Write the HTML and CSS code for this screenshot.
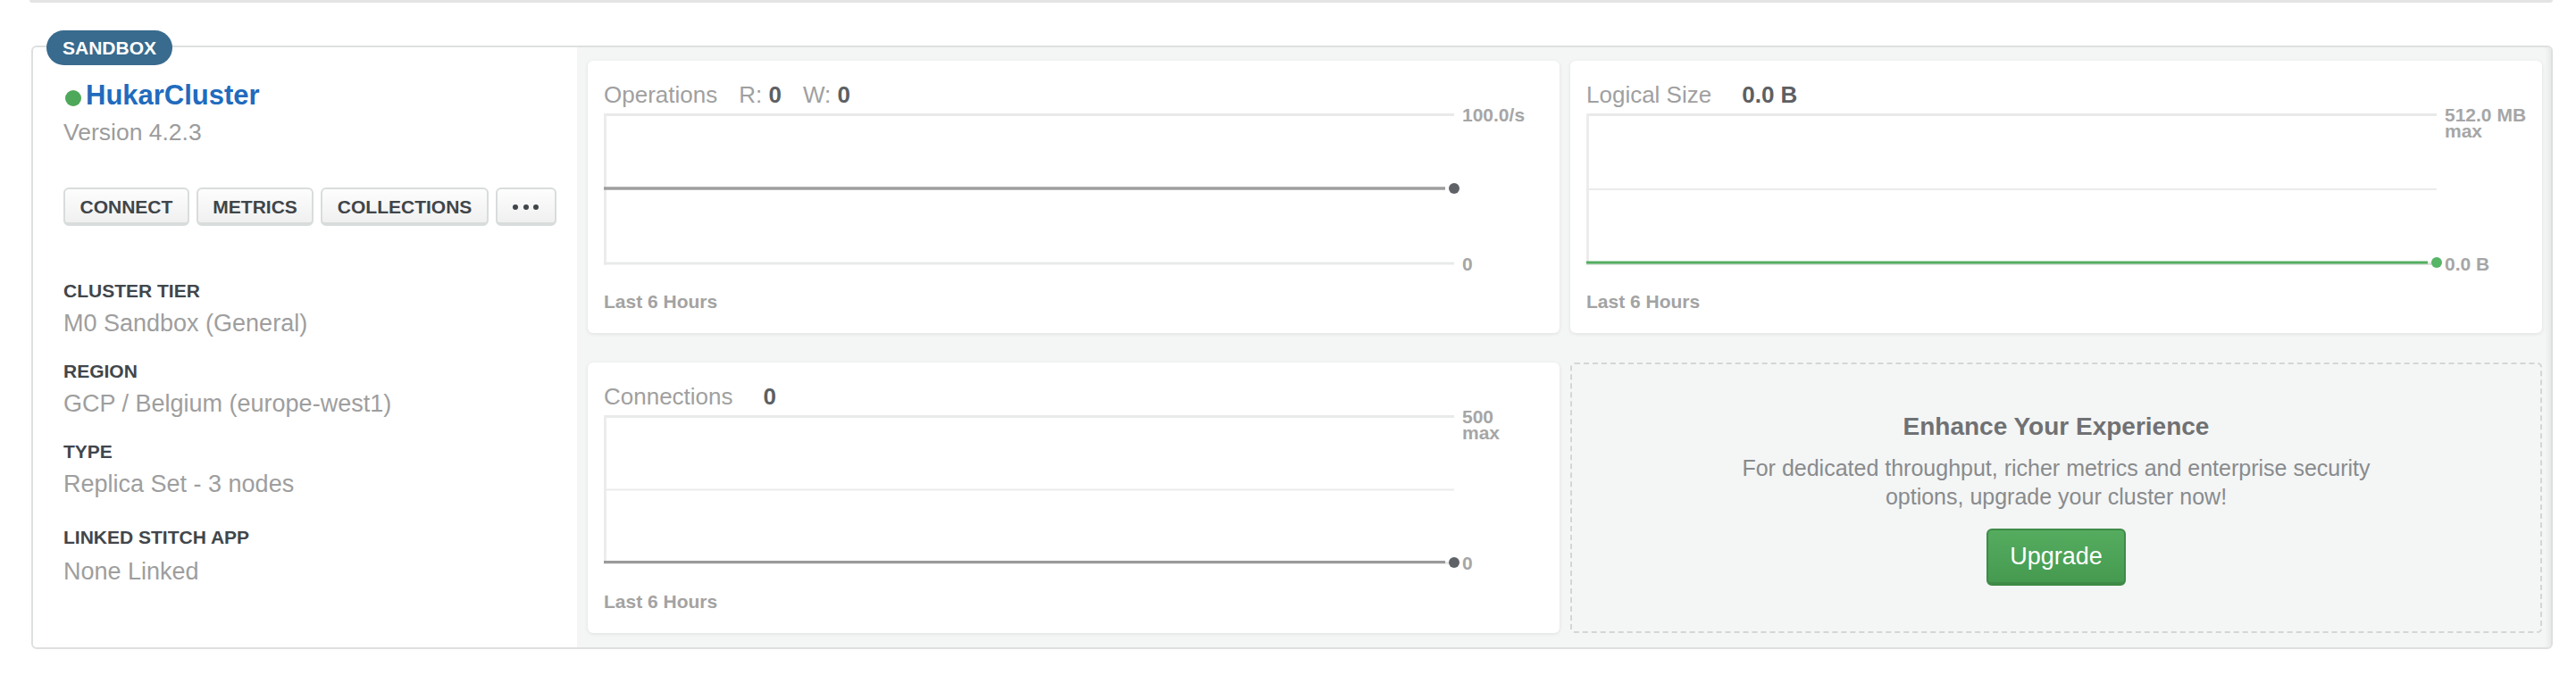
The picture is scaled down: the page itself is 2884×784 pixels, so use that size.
FILE: index.html
```html
<!DOCTYPE html>
<html lang="en">
<head>
<meta charset="utf-8">
<title>Cluster</title>
<link rel="stylesheet" href="styles.css">
</head>
<body>
<div class="prev"></div>
<div class="cluster">
  <span class="badge">SANDBOX</span>
  <div class="info">
    <div class="name-row"><span class="status-dot"></span><span class="name">HukarCluster</span></div>
    <div class="version">Version 4.2.3</div>
    <div class="actions">
      <button class="btn">CONNECT</button>
      <button class="btn">METRICS</button>
      <button class="btn">COLLECTIONS</button>
      <button class="btn btn-more"><span class="d"></span><span class="d"></span><span class="d"></span></button>
    </div>
    <div class="item first"><div class="label">CLUSTER TIER</div><div class="value">M0 Sandbox (General)</div></div>
    <div class="item"><div class="label">REGION</div><div class="value">GCP / Belgium (europe-west1)</div></div>
    <div class="item"><div class="label">TYPE</div><div class="value">Replica Set - 3 nodes</div></div>
    <div class="item last"><div class="label">LINKED STITCH APP</div><div class="value">None Linked</div></div>
  </div>
  <div class="metrics">
    <div class="chart">
      <div class="chart-head"><span class="ttl">Operations</span><span class="stat">R: <b>0</b></span><span class="stat">W: <b>0</b></span></div>
      <div class="plot-row">
        <svg class="plot" width="958" height="172" viewBox="0 0 958 172">
          <line x1="0" y1="2.5" x2="952" y2="2.5" stroke="#e8e9e9" stroke-width="3"/>
          <line x1="1.5" y1="1" x2="1.5" y2="170.5" stroke="#ececec" stroke-width="3"/>
          <line x1="0" y1="169" x2="952" y2="169" stroke="#e8e9e9" stroke-width="3"/>
          <line x1="0" y1="85" x2="942" y2="85" stroke="#9e9e9e" stroke-width="3.5"/>
          <circle cx="952" cy="85" r="6" fill="#5f6266"/>
        </svg>
        <div class="axis"><div>100.0/s</div><div>0</div></div>
      </div>
      <div class="chart-foot">Last 6 Hours</div>
    </div>
    <div class="chart">
      <div class="chart-head"><span class="ttl">Logical Size</span><b class="val">0.0 B</b></div>
      <div class="plot-row">
        <svg class="plot" width="958" height="172" viewBox="0 0 958 172">
          <line x1="0" y1="2.5" x2="952" y2="2.5" stroke="#e8e9e9" stroke-width="3"/>
          <line x1="1.5" y1="1" x2="1.5" y2="170.5" stroke="#ececec" stroke-width="3"/>
          <line x1="0" y1="86" x2="952" y2="86" stroke="#ebebeb" stroke-width="2"/>
          <line x1="0" y1="169.5" x2="952" y2="169.5" stroke="#dfe3e0" stroke-width="3"/>
          <line x1="0" y1="168" x2="942" y2="168" stroke="#52ad5f" stroke-width="3"/>
          <circle cx="952" cy="168" r="6" fill="#56b566"/>
        </svg>
        <div class="axis"><div>512.0 MB<br>max</div><div>0.0 B</div></div>
      </div>
      <div class="chart-foot">Last 6 Hours</div>
    </div>
    <div class="chart">
      <div class="chart-head"><span class="ttl">Connections</span><b class="val">0</b></div>
      <div class="plot-row">
        <svg class="plot" width="958" height="169" viewBox="0 0 958 169">
          <line x1="0" y1="2.5" x2="952" y2="2.5" stroke="#e8e9e9" stroke-width="3"/>
          <line x1="1.5" y1="1" x2="1.5" y2="167.5" stroke="#ececec" stroke-width="3"/>
          <line x1="0" y1="84.5" x2="952" y2="84.5" stroke="#ebebeb" stroke-width="2"/>
          <line x1="0" y1="166.5" x2="952" y2="166.5" stroke="#e8e9e9" stroke-width="3"/>
          <line x1="0" y1="165.5" x2="942" y2="165.5" stroke="#9a9a9a" stroke-width="3"/>
          <circle cx="952" cy="166" r="6" fill="#5f6266"/>
        </svg>
        <div class="axis"><div>500<br>max</div><div>0</div></div>
      </div>
      <div class="chart-foot conn-foot">Last 6 Hours</div>
    </div>
    <div class="upsell">
      <div class="upsell-title">Enhance Your Experience</div>
      <p class="upsell-text">For dedicated throughput, richer metrics and enterprise security options, upgrade your cluster now!</p>
      <button class="upgrade">Upgrade</button>
    </div>
  </div>
</div>
</body>
</html>
```
FILE: styles.css
```css
html, body {
  margin: 0;
  padding: 0;
  background: #ffffff;
  font-family: "Liberation Sans", Arial, Helvetica, sans-serif;
}

.prev {
  height: 3px;
  margin: 0 26px 0 33px;
  background: #e4e4e4;
  border-radius: 0 0 5px 5px;
}

.cluster {
  position: relative;
  display: flex;
  height: 676px;
  box-sizing: border-box;
  margin: 48px 26px 0 35px;
  border: 2px solid #dedfdf;
  border-radius: 6px;
}

.badge {
  position: absolute;
  left: 15px;
  top: -19px;
  width: 141px;
  height: 39px;
  box-sizing: border-box;
  border-radius: 20px;
  background: #386b8e;
  color: #ffffff;
  font-weight: bold;
  font-size: 21px;
  line-height: 39px;
  text-align: center;
}

.info {
  width: 609px;
  flex: none;
  box-sizing: border-box;
  padding: 35.5px 0 0 34px;
  background: #ffffff;
  border-radius: 6px 0 0 6px;
}

.name-row {
  display: flex;
  align-items: flex-start;
  height: 36px;
}

.status-dot {
  width: 18px;
  height: 18px;
  margin: 12px 5.5px 0 1.5px;
  border-radius: 50%;
  background: #4ea85a;
  flex: none;
}

.name {
  font-size: 31px;
  line-height: 36px;
  font-weight: bold;
  color: #216bbd;
}

.version {
  margin-top: 7px;
  font-size: 26.5px;
  line-height: 32px;
  color: #9c9c9c;
}

.actions {
  display: flex;
  gap: 8px;
  margin-top: 46.4px;
}

.btn {
  height: 43px;
  box-sizing: border-box;
  padding: 3px 16.5px 0;
  border: 2px solid #d9dcdc;
  border-bottom-width: 4px;
  border-radius: 6px;
  background: linear-gradient(#fdfdfd, #f0f0f0);
  font-family: "Liberation Sans", Arial, sans-serif;
  font-weight: bold;
  font-size: 21px;
  line-height: 34px;
  color: #404549;
  cursor: pointer;
}

.btn-more {
  width: 68px;
  padding: 3px 0 0;
  display: flex;
  justify-content: center;
  align-items: center;
  gap: 5.5px;
}

.btn-more .d {
  width: 6px;
  height: 6px;
  border-radius: 50%;
  background: #404549;
}

.item {
  margin-top: 26px;
}

.item.first {
  margin-top: 60.8px;
}

.item.last {
  margin-top: 32px;
}

.label {
  font-size: 21px;
  line-height: 24px;
  font-weight: bold;
  color: #41464b;
}

.value {
  margin-top: 8px;
  font-size: 27px;
  line-height: 32px;
  color: #9e9e9e;
}

.item.last .value {
  margin-top: 10px;
}

.metrics {
  flex: 1;
  display: grid;
  grid-template-columns: 1088px 1088px;
  grid-template-rows: 305px 303px;
  column-gap: 12px;
  row-gap: 33px;
  padding: 15px 10px 16px 12px;
  background: #f4f5f5;
  border-radius: 0 4px 4px 0;
  box-shadow: inset -8px 0 6px -6px rgba(0, 0, 0, 0.07);
}

.chart {
  background: #ffffff;
  border-radius: 6px;
  box-shadow: 0 1px 4px rgba(0, 0, 0, 0.09);
  padding: 23.3px 18px 0 18px;
  box-sizing: border-box;
  min-width: 0;
}

.chart-head {
  font-size: 26px;
  line-height: 30px;
  color: #a0a0a0;
  white-space: nowrap;
}

.chart-head b {
  color: #5d6063;
  font-weight: bold;
}

.stat {
  margin-left: 24px;
}

.val {
  margin-left: 34px;
}

.plot-row {
  display: flex;
  align-items: flex-start;
  margin-top: -2.3px;
  padding: 7px 0;
}

.plot {
  display: block;
  flex: none;
  overflow: visible;
}

.axis {
  align-self: stretch;
  display: flex;
  flex-direction: column;
  justify-content: space-between;
  margin: -6px 0 -7px 3px;
  font-size: 21px;
  line-height: 18px;
  font-weight: bold;
  color: #a6a6a6;
  white-space: nowrap;
}

.chart-foot {
  margin-top: 20.8px;
  font-size: 21px;
  line-height: 24px;
  font-weight: bold;
  color: #a3a3a3;
}

.chart-foot.conn-foot {
  margin-top: 21.9px;
}

.upsell {
  display: flex;
  flex-direction: column;
  align-items: center;
  box-sizing: border-box;
  padding-top: 54.4px;
  border: 2px dashed #d3d6d6;
  border-radius: 5px;
  text-align: center;
}

.upsell-title {
  font-size: 28px;
  line-height: 32px;
  font-weight: bold;
  color: #6f7173;
}

.upsell-text {
  margin: 13.8px 0 0;
  max-width: 720px;
  font-size: 25px;
  line-height: 32px;
  color: #888b8d;
}

.upgrade {
  margin-top: 19.8px;
  width: 156px;
  height: 64px;
  box-sizing: border-box;
  padding: 0;
  border: 2px solid #3e8b47;
  border-bottom-width: 4px;
  border-radius: 6px;
  background: linear-gradient(#55ac5f, #459a50);
  color: #ffffff;
  font-family: "Liberation Sans", Arial, sans-serif;
  font-size: 27px;
  line-height: 58px;
  cursor: pointer;
}
```
